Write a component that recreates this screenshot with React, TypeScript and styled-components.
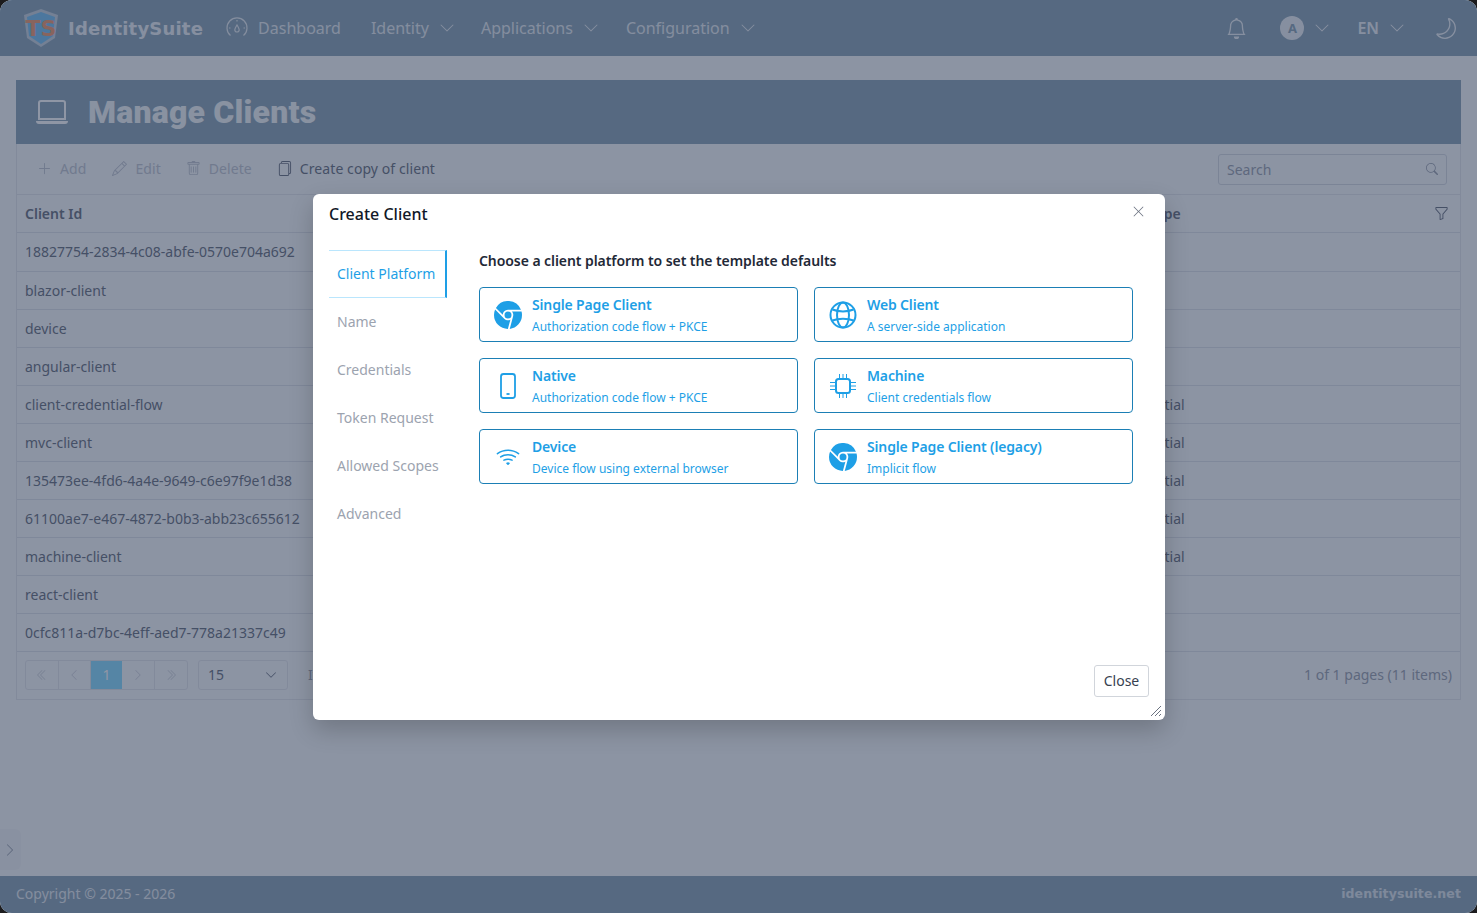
import * as React from 'react'
import styled, { createGlobalStyle } from 'styled-components'
import {
    BsBell,
    BsBrowserChrome,
    BsChevronDoubleLeft,
    BsChevronDoubleRight,
    BsChevronDown,
    BsChevronLeft,
    BsChevronRight,
    BsFiles,
    BsFunnel,
    BsLaptop,
    BsMoon,
    BsPencil,
    BsPlusLg,
    BsSearch,
    BsTrash,
    BsWifi,
    BsXLg,
} from 'react-icons/bs'

const GlobalStyle = createGlobalStyle`
    html, body {
        margin: 0;
        padding: 0;
        height: 100%;
        background: #1c1c1e;
    }
    body {
        font-family: "Noto Sans", "Open Sans", sans-serif;
        font-size: 14px;
    }
    * { box-sizing: border-box; }
`

const Page = styled.div`
    position: relative;
    width: 1477px;
    height: 913px;
    display: flex;
    flex-direction: column;
    background: #f9fafb;
    border-radius: 12px;
    overflow: hidden;
`

const NavBar = styled.header`
    height: 56px;
    flex-shrink: 0;
    display: flex;
    align-items: center;
    padding: 0 21px 0 22px;
    background: #8ca5b7;
    color: #fff;
`

const Brand = styled.div`
    display: flex;
    align-items: center;
    gap: 8px;
    margin-right: 23px;
`

const BrandName = styled.span`
    font-family: "DejaVu Sans", sans-serif;
    font-weight: 700;
    font-size: 18px;
    letter-spacing: 0.2px;
    opacity: 0.85;
`

const NavItem = styled.div<{ $mr?: number }>`
    display: flex;
    align-items: center;
    font-size: 16px;
    margin-right: ${p => p.$mr ?? 27}px;
    gap: 10px;
    opacity: 0.8;
`

const NavSpacer = styled.div`
    flex: 1;
`

const NavAction = styled.div<{ $mr?: number }>`
    display: flex;
    align-items: center;
    gap: 10px;
    margin-right: ${p => p.$mr ?? 0}px;
    opacity: 0.85;
`

const MoonIcon = styled(BsMoon)`
    transform: scaleX(-1);
`

const Avatar = styled.div`
    width: 24px;
    height: 24px;
    border-radius: 50%;
    background: #fff;
    color: #8ca5b7;
    display: flex;
    align-items: center;
    justify-content: center;
    font-size: 13px;
    font-weight: 700;
`

const LangLabel = styled.span`
    font-size: 16px;
    font-weight: 600;
`

const Main = styled.main`
    flex: 1;
    padding: 24px 16px 0;
`

const TitleBar = styled.div`
    height: 64px;
    display: flex;
    align-items: center;
    gap: 20px;
    padding-left: 20px;
    background: #8ca5b7;
    color: #fff;
`

const PageTitle = styled.h1`
    margin: 0;
    font-family: "Roboto", sans-serif;
    font-size: 32px;
    font-weight: 900;
    letter-spacing: 0.2px;
    opacity: 0.9;
`

const Panel = styled.section`
    border: 1px solid #e5e7eb;
    border-top: 0;
    background: #f9fafb;
`

const Toolbar = styled.div`
    height: 51px;
    display: flex;
    align-items: center;
    padding: 0 13px 0 20px;
    border-bottom: 1px solid #e5e7eb;
`

const ToolButton = styled.div<{ $disabled?: boolean }>`
    display: flex;
    align-items: center;
    gap: 8px;
    margin-right: 25px;
    padding-bottom: 2px;
    letter-spacing: 0.08px;
    color: ${p => (p.$disabled ? '#c2c7d0' : '#6b7280')};

    &:first-child {
        margin-right: 26px;
    }
`

const SearchBox = styled.div`
    margin-left: auto;
    width: 229px;
    height: 31px;
    display: flex;
    align-items: center;
    justify-content: space-between;
    padding: 0 8px;
    border: 1px solid #d6dae1;
    border-radius: 3px;
    color: #9ca3af;
`

const TableRow = styled.div<{ $head?: boolean; $tall?: boolean }>`
    height: ${p => (p.$tall ? 39 : 38)}px;
    display: grid;
    grid-template-columns: 1080px 1fr auto;
    align-items: center;
    padding: 0 11px ${p => (p.$tall ? 1 : 0)}px 8px;
    border-bottom: 1px solid #dfe3e9;
    color: #6b7280;
    font-weight: ${p => (p.$head ? 600 : 400)};
`

const Pager = styled.div`
    height: 47px;
    display: flex;
    align-items: center;
    padding: 0 8px 2px;
    color: #9ca3af;
`

const PageButtons = styled.div`
    display: flex;
    height: 30px;
    border: 1px solid #e5e7eb;
    border-radius: 3px;
    margin-right: 10px;
`

const PageButton = styled.div<{ $active?: boolean; $divided?: boolean }>`
    width: ${p => (p.$active ? '31px' : '32.5px')};
    display: flex;
    align-items: center;
    justify-content: center;
    background: ${p => (p.$active ? '#8adcff' : 'transparent')};
    color: ${p => (p.$active ? '#fff' : '#d1d5db')};
    border-right: ${p => (p.$divided ? '1px solid #e5e7eb' : '0')};
`

const PageSize = styled.div`
    width: 90px;
    height: 30px;
    display: flex;
    align-items: center;
    justify-content: space-between;
    padding: 0 10px 0 9px;
    border: 1px solid #e5e7eb;
    border-radius: 3px;
    margin-right: 20px;
    color: #6b7280;
`

const PagerInfo = styled.div`
    margin-left: auto;
`

const Footer = styled.footer`
    height: 37px;
    flex-shrink: 0;
    display: flex;
    align-items: center;
    justify-content: space-between;
    padding: 0 16px 2px;
    background: #8ca5b7;
    color: #fff;
    font-size: 14px;
`

const FooterText = styled.span`
    opacity: 0.8;
`

const FooterBrand = styled.span`
    font-family: "DejaVu Sans", sans-serif;
    font-weight: 700;
    font-size: 12.5px;
    letter-spacing: 0.1px;
    opacity: 0.7;
`

const SideHandle = styled.div`
    position: absolute;
    left: 0;
    bottom: 43px;
    width: 21px;
    height: 41px;
    display: flex;
    align-items: center;
    padding-left: 3px;
    background: #f3f4f6;
    border-radius: 0 6px 6px 0;
    color: #9ca3af;
`

const Overlay = styled.div`
    position: absolute;
    inset: 0;
    padding: 1px 0 0 1px;
    display: flex;
    align-items: center;
    justify-content: center;
    background: rgba(32, 45, 75, 0.5);
`

const Dialog = styled.div`
    position: relative;
    width: 852px;
    height: 526px;
    display: flex;
    flex-direction: column;
    background: #fff;
    border-radius: 6px;
    box-shadow: 0 10px 25px rgba(0, 0, 0, 0.2);
`

const DialogHeader = styled.div`
    height: 56px;
    flex-shrink: 0;
    display: flex;
    align-items: flex-start;
    justify-content: space-between;
    padding: 9px 20px 0 16px;
`

const DialogTitle = styled.h2`
    margin: 0;
    font-size: 16px;
    line-height: 22px;
    font-weight: 500;
    color: #111827;
`

const CloseIcon = styled.div`
    margin-top: 2px;
    color: #6b7280;
    display: flex;
`

const DialogBody = styled.div`
    flex: 1;
    display: flex;
    padding: 0 16px;
`

const Tabs = styled.nav`
    width: 118px;
    flex-shrink: 0;
    display: flex;
    flex-direction: column;
`

const Tab = styled.div<{ $active?: boolean }>`
    height: 48px;
    display: flex;
    align-items: center;
    padding: 0 0 2px 8px;
    white-space: nowrap;
    color: ${p => (p.$active ? '#1e9fe6' : '#9ca3af')};
    border-top: 1px solid ${p => (p.$active ? '#bae6fd' : 'transparent')};
    border-bottom: 1px solid ${p => (p.$active ? '#bae6fd' : 'transparent')};
    border-right: 2px solid ${p => (p.$active ? '#1e9fe6' : 'transparent')};
`

const TabPane = styled.div`
    flex: 1;
    padding-left: 32px;
`

const PaneHeading = styled.div`
    height: 37px;
    padding-top: 1px;
    font-size: 14px;
    line-height: 20px;
    font-weight: 600;
    letter-spacing: -0.07px;
    color: #1f2937;
`

const CardGrid = styled.div`
    display: grid;
    grid-template-columns: 319px 319px;
    grid-auto-rows: 55px;
    gap: 16px;
`

const Card = styled.div`
    display: flex;
    align-items: center;
    gap: 10px;
    padding: 0 14px;
    border: 1px solid #1b7fb5;
    border-radius: 4px;
    color: #1e9fe6;
`

const CardIcon = styled.div`
    width: 28px;
    height: 28px;
    display: flex;
    align-items: center;
    justify-content: center;
    flex-shrink: 0;
`

const CardText = styled.div`
    display: flex;
    flex-direction: column;
`

const CardTitle = styled.div`
    font-size: 14px;
    line-height: 20px;
    font-weight: 600;
    letter-spacing: -0.15px;
    margin-bottom: 4px;
`

const CardSub = styled.div`
    font-size: 12px;
    line-height: 16px;
`

const DialogFooter = styled.div`
    height: 71px;
    flex-shrink: 0;
    display: flex;
    justify-content: flex-end;
    padding: 16px 16px 0;
`

const CloseButton = styled.div`
    width: 55px;
    height: 32px;
    display: flex;
    align-items: center;
    justify-content: center;
    padding-bottom: 2px;
    border: 1px solid #d1d5db;
    border-radius: 3px;
    color: #374151;
`

const ResizeHandle = styled.svg`
    position: absolute;
    right: 3px;
    bottom: 3px;
`

const ShieldLogo = () => (
    <svg width="38" height="40" viewBox="0 0 38 40">
        <path d="M19 1 L36 7 L33 30 L19 39 L5 30 L2 7 Z" fill="#c8d2dc" />
        <path d="M19 4 L33 9 L31 28 L19 36 L7 28 L5 9 Z" fill="#78c0f0" />
        <text
            x="19"
            y="28"
            textAnchor="middle"
            fontFamily="DejaVu Sans"
            fontWeight="700"
            fontSize="22"
            fill="#f09a70"
        >
            TS
        </text>
    </svg>
)

const GaugeIcon = () => (
    <svg width="22" height="22" viewBox="0 0 22 22" fill="none" stroke="currentColor" strokeWidth="1.2">
        <path d="M4.5 18.5 A10 10 0 1 1 17.5 18.5" />
        <path d="M3 11 H4.5 M19 11 H17.5 M11 3 V4.5" />
        <path d="M11 8 C12.5 10.5 13.2 11.5 13.2 12.8 A2.2 2.2 0 0 1 8.8 12.8 C8.8 11.5 9.5 10.5 11 8 Z" />
    </svg>
)

const GlobeIcon = () => (
    <svg width="28" height="28" viewBox="0 0 28 28" fill="none" stroke="currentColor" strokeWidth="2">
        <circle cx="14" cy="14" r="12.5" />
        <ellipse cx="14" cy="14" rx="6" ry="12.5" />
        <path d="M3.5 8.5 C9 11 19 11 24.5 8.5" />
        <path d="M3.5 19.5 C9 17 19 17 24.5 19.5" />
    </svg>
)

const PhoneIcon = () => (
    <svg width="28" height="28" viewBox="0 0 28 28" fill="none" stroke="currentColor" strokeWidth="1.8">
        <rect x="7" y="2" width="14" height="24" rx="2.5" />
        <path d="M12.5 22 H15.5" />
    </svg>
)

const ChipIcon = () => (
    <svg width="28" height="28" viewBox="0 0 28 28" fill="none" stroke="currentColor">
        <rect x="7" y="7" width="14" height="14" rx="2.5" strokeWidth="2" />
        <path
            d="M10.5 2 V6 M14 2 V6 M17.5 2 V6 M10.5 22 V26 M14 22 V26 M17.5 22 V26 M1 10.5 H6 M1 14 H6 M1 17.5 H6 M22 10.5 H27 M22 14 H27 M22 17.5 H27"
            strokeWidth="1"
        />
    </svg>
)

const rows = [
    ['18827754-2834-4c08-abfe-0570e704a692', 'Public'],
    ['blazor-client', 'Public'],
    ['device', 'Public'],
    ['angular-client', 'Public'],
    ['client-credential-flow', 'Confidential'],
    ['mvc-client', 'Confidential'],
    ['135473ee-4fd6-4a4e-9649-c6e97f9e1d38', 'Confidential'],
    ['61100ae7-e467-4872-b0b3-abb23c655612', 'Confidential'],
    ['machine-client', 'Confidential'],
    ['react-client', 'Public'],
    ['0cfc811a-d7bc-4eff-aed7-778a21337c49', 'Public'],
]

const tabs = [
    'Client Platform',
    'Name',
    'Credentials',
    'Token Request',
    'Allowed Scopes',
    'Advanced',
]

const platforms = [
    { title: 'Single Page Client', sub: 'Authorization code flow + PKCE', icon: <BsBrowserChrome size={28} /> },
    { title: 'Web Client', sub: 'A server-side application', icon: <GlobeIcon /> },
    { title: 'Native', sub: 'Authorization code flow + PKCE', icon: <PhoneIcon /> },
    { title: 'Machine', sub: 'Client credentials flow', icon: <ChipIcon /> },
    { title: 'Device', sub: 'Device flow using external browser', icon: <BsWifi size={24} /> },
    { title: 'Single Page Client (legacy)', sub: 'Implicit flow', icon: <BsBrowserChrome size={28} /> },
]

const App = () => {
    return (
        <Page>
            <GlobalStyle />
            <NavBar>
                <Brand>
                    <ShieldLogo />
                    <BrandName>IdentitySuite</BrandName>
                </Brand>
                <NavItem $mr={30}>
                    <GaugeIcon />
                    Dashboard
                </NavItem>
                <NavItem $mr={26}>
                    Identity
                    <BsChevronDown size={16} />
                </NavItem>
                <NavItem>
                    Applications
                    <BsChevronDown size={16} />
                </NavItem>
                <NavItem>
                    Configuration
                    <BsChevronDown size={16} />
                </NavItem>
                <NavSpacer />
                <NavAction $mr={33}>
                    <BsBell size={21} />
                </NavAction>
                <NavAction $mr={27}>
                    <Avatar>A</Avatar>
                    <BsChevronDown size={16} />
                </NavAction>
                <NavAction $mr={30}>
                    <LangLabel>EN</LangLabel>
                    <BsChevronDown size={16} />
                </NavAction>
                <NavAction>
                    <MoonIcon size={21} />
                </NavAction>
            </NavBar>
            <Main>
                <TitleBar>
                    <BsLaptop size={32} />
                    <PageTitle>Manage Clients</PageTitle>
                </TitleBar>
                <Panel>
                    <Toolbar>
                        <ToolButton $disabled>
                            <BsPlusLg size={15} />
                            Add
                        </ToolButton>
                        <ToolButton $disabled>
                            <BsPencil size={15} />
                            Edit
                        </ToolButton>
                        <ToolButton $disabled>
                            <BsTrash size={15} />
                            Delete
                        </ToolButton>
                        <ToolButton>
                            <BsFiles size={15} />
                            Create copy of client
                        </ToolButton>
                        <SearchBox>
                            Search
                            <BsSearch size={12} />
                        </SearchBox>
                    </Toolbar>
                    <TableRow $head>
                        <span>Client Id</span>
                        <span>Client Type</span>
                        <BsFunnel size={15} />
                    </TableRow>
                    {rows.map((row, i) => (
                        <TableRow key={row[0]} $tall={i === 0}>
                            <span>{row[0]}</span>
                            <span>{row[1]}</span>
                        </TableRow>
                    ))}
                    <Pager>
                        <PageButtons>
                            <PageButton $divided>
                                <BsChevronDoubleLeft size={12} />
                            </PageButton>
                            <PageButton $divided>
                                <BsChevronLeft size={12} />
                            </PageButton>
                            <PageButton $active>1</PageButton>
                            <PageButton $divided>
                                <BsChevronRight size={12} />
                            </PageButton>
                            <PageButton>
                                <BsChevronDoubleRight size={12} />
                            </PageButton>
                        </PageButtons>
                        <PageSize>
                            15
                            <BsChevronDown size={12} />
                        </PageSize>
                        <span>Items per page</span>
                        <PagerInfo>1 of 1 pages (11 items)</PagerInfo>
                    </Pager>
                </Panel>
            </Main>
            <Footer>
                <FooterText>Copyright © 2025 - 2026</FooterText>
                <FooterBrand>identitysuite.net</FooterBrand>
            </Footer>
            <SideHandle>
                <BsChevronRight size={14} />
            </SideHandle>
            <Overlay>
                <Dialog>
                    <DialogHeader>
                        <DialogTitle>Create Client</DialogTitle>
                        <CloseIcon>
                            <BsXLg size={13} />
                        </CloseIcon>
                    </DialogHeader>
                    <DialogBody>
                        <Tabs>
                            {tabs.map((tab, i) => (
                                <Tab key={tab} $active={i === 0}>
                                    {tab}
                                </Tab>
                            ))}
                        </Tabs>
                        <TabPane>
                            <PaneHeading>
                                Choose a client platform to set the template
                                defaults
                            </PaneHeading>
                            <CardGrid>
                                {platforms.map(item => (
                                    <Card key={item.title}>
                                        <CardIcon>{item.icon}</CardIcon>
                                        <CardText>
                                            <CardTitle>{item.title}</CardTitle>
                                            <CardSub>{item.sub}</CardSub>
                                        </CardText>
                                    </Card>
                                ))}
                            </CardGrid>
                        </TabPane>
                    </DialogBody>
                    <DialogFooter>
                        <CloseButton>Close</CloseButton>
                    </DialogFooter>
                    <ResizeHandle width="12" height="12" viewBox="0 0 12 12">
                        <path
                            d="M1 11 L11 1 M5 11 L11 5 M9 11 L11 9"
                            stroke="#6b7280"
                            strokeWidth="1"
                            fill="none"
                        />
                    </ResizeHandle>
                </Dialog>
            </Overlay>
        </Page>
    )
}

export default App
